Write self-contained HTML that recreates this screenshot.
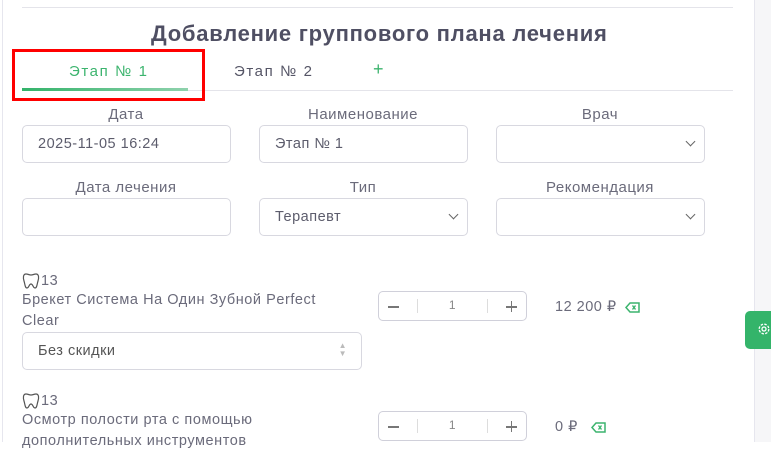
<!DOCTYPE html>
<html><head><meta charset="utf-8"><style>
*{box-sizing:border-box;margin:0;padding:0}
body{width:771px;height:442px;overflow:hidden;background:#fff;font-family:"Liberation Sans",sans-serif;color:#666677;position:relative;letter-spacing:0.5px}
.a{position:absolute}
.lbl{position:absolute;font-size:15px;color:#6b6b7b;text-align:center;width:208px}
.box{position:absolute;border:1px solid #d8d8e0;border-radius:5px;width:209px;height:38px;font-size:14.5px;color:#5c5c6c;padding:10px 0 0 15px}
.chev{position:absolute;right:10px;top:12px;width:7px;height:7px;border-right:1.4px solid #666;border-bottom:1.4px solid #666;transform:rotate(45deg)}
.t{font-size:14.5px;color:#6b6b7b;line-height:21px}
.stp{position:absolute;width:149px;height:30px;border:1px solid #d0d0da;border-radius:5px;font-size:12px;color:#888}
.stp .m{position:absolute;left:9px;top:14px;width:11px;height:1.5px;background:#777}
.stp .p1{position:absolute;right:9px;top:14px;width:11px;height:1.5px;background:#777}
.stp .p2{position:absolute;right:14px;top:9px;width:1.5px;height:11px;background:#777}
.stp .s1{position:absolute;left:38px;top:7px;width:1px;height:14px;background:#ddd}
.stp .s2{position:absolute;right:38px;top:7px;width:1px;height:14px;background:#ddd}
.stp .v{position:absolute;left:0;width:100%;text-align:center;top:6px}
</style></head><body>
<div class="a" style="left:2px;top:0;width:1px;height:442px;background:#e6e6ee"></div>
<div class="a" style="left:22px;top:7px;width:711px;height:1px;background:#e4e4ea"></div>
<div class="a" style="left:754px;top:0;width:17px;height:442px;background:#f6f6f8;border-left:1px solid #e6e6ee"></div>
<div class="a" style="left:151px;top:21px;width:460px;font-size:22px;letter-spacing:0.75px;font-weight:bold;color:#4f4f63;white-space:nowrap">Добавление группового плана лечения</div>
<div class="a" style="left:69px;top:63px;font-size:15px;letter-spacing:1.6px;color:#3cb46e;white-space:nowrap">Этап № 1</div>
<div class="a" style="left:234px;top:63px;font-size:15px;letter-spacing:1.6px;color:#555566;white-space:nowrap">Этап № 2</div>
<div class="a" style="left:373px;top:59px;font-size:18px;color:#3cb46e">+</div>
<div class="a" style="left:22px;top:90px;width:711px;height:1px;background:#e4e4ea"></div>
<div class="a" style="left:22px;top:88px;width:166px;height:3px;background:linear-gradient(90deg,#33b36a,#8fd2ad)"></div>
<div class="a" style="left:12px;top:49px;width:193px;height:52px;border:3px solid #f00"></div>

<div class="lbl" style="left:22px;top:106px">Дата</div>
<div class="lbl" style="left:259px;top:106px">Наименование</div>
<div class="lbl" style="left:496px;top:106px">Врач</div>
<div class="box" style="left:22px;top:125px">2025-11-05 16:24</div>
<div class="box" style="left:259px;top:125px">Этап № 1</div>
<div class="box" style="left:496px;top:125px"><div class="chev"></div></div>
<div class="lbl" style="left:22px;top:179px">Дата лечения</div>
<div class="lbl" style="left:259px;top:179px">Тип</div>
<div class="lbl" style="left:496px;top:179px">Рекомендация</div>
<div class="box" style="left:22px;top:198px"></div>
<div class="box" style="left:259px;top:198px">Терапевт<div class="chev"></div></div>
<div class="box" style="left:496px;top:198px"><div class="chev"></div></div>

<svg class="a" style="left:22px;top:272px" width="18" height="18" viewBox="0 0 18 18"><path d="M4 2C1 2 1 6 2 9C3 12 3 16 5 16C7 16 7 12 9 12C11 12 11 16 13 16C15 16 15 12 16 9C17 6 17 2 14 2C12 2 11 3 9 3C7 3 6 2 4 2Z" fill="none" stroke="#555" stroke-width="1.2"/></svg>
<div class="a t" style="left:41px;top:271px">13</div>
<div class="a t" style="left:22px;top:290px;width:310px;letter-spacing:0.55px">Брекет Система На Один Зубной Perfect Clear</div>
<div class="a" style="left:22px;top:332px;width:340px;height:38px;border:1px solid #d8d8e0;border-radius:5px;font-size:14.5px;color:#555;padding:10px 0 0 15px">Без скидки<span style="position:absolute;right:14px;top:9px;font-size:8px;color:#bbb;line-height:8px">▲<br>▼</span></div>
<div class="stp" style="left:378px;top:291px"><div class="m"></div><div class="s1"></div><div class="v">1</div><div class="s2"></div><div class="p1"></div><div class="p2"></div></div>
<div class="a t" style="left:555px;top:297px">12 200 ₽</div>
<svg class="a" style="left:625px;top:302px" width="15" height="11" viewBox="0 0 15 11"><path d="M1 5.5L5 1H14V10H5Z" fill="none" stroke="#3cb46e" stroke-width="1.5"/><path d="M7.5 3.5L10.5 7.5M10.5 3.5L7.5 7.5" stroke="#3cb46e" stroke-width="1.4"/></svg>

<svg class="a" style="left:22px;top:392px" width="18" height="18" viewBox="0 0 18 18"><path d="M4 2C1 2 1 6 2 9C3 12 3 16 5 16C7 16 7 12 9 12C11 12 11 16 13 16C15 16 15 12 16 9C17 6 17 2 14 2C12 2 11 3 9 3C7 3 6 2 4 2Z" fill="none" stroke="#555" stroke-width="1.2"/></svg>
<div class="a t" style="left:41px;top:391px">13</div>
<div class="a t" style="left:22px;top:410px;width:320px;letter-spacing:0.55px">Осмотр полости рта с помощью дополнительных инструментов</div>
<div class="stp" style="left:378px;top:411px"><div class="m"></div><div class="s1"></div><div class="v">1</div><div class="s2"></div><div class="p1"></div><div class="p2"></div></div>
<div class="a t" style="left:555px;top:417px">0 ₽</div>
<svg class="a" style="left:591px;top:422px" width="15" height="11" viewBox="0 0 15 11"><path d="M1 5.5L5 1H14V10H5Z" fill="none" stroke="#3cb46e" stroke-width="1.5"/><path d="M7.5 3.5L10.5 7.5M10.5 3.5L7.5 7.5" stroke="#3cb46e" stroke-width="1.4"/></svg>

<div class="a" style="left:745px;top:311px;width:30px;height:38px;background:#34b46a;border-radius:5px 0 0 5px"></div>
<svg class="a" style="left:757px;top:322px" width="14" height="14" viewBox="0 0 14 14"><circle cx="7" cy="7" r="2" fill="none" stroke="#fff" stroke-width="1.3"/><circle cx="7" cy="7" r="4.8" fill="none" stroke="#fff" stroke-width="1.3" stroke-dasharray="2.5 1.3"/></svg>
</body></html>
